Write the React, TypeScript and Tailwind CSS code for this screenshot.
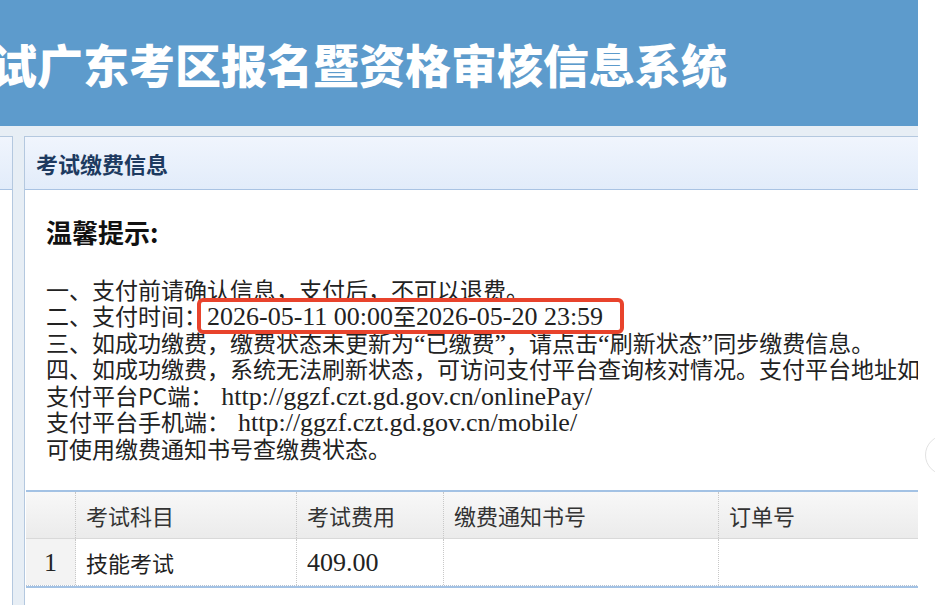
const cjk = "font-['Noto_Sans_CJK_SC',sans-serif]";
const serif = "font-['Liberation_Serif','Noto_Sans_CJK_SC',serif] text-[26px]";

function Line({ children, className = "" }: { children: React.ReactNode; className?: string }) {
  return <div className={`h-[26.5px] leading-[26.5px] whitespace-nowrap ${className}`}>{children}</div>;
}

export default function App() {
  return (
    <div className={`relative h-[605px] w-[935px] overflow-hidden bg-white ${cjk}`}>
      <div className="flex h-full w-[918px] flex-col overflow-hidden bg-[#e7eef5]">
        <header className="flex h-[126px] shrink-0 items-center bg-[#5d9bcc]">
          <h1 className="-ml-[9px] whitespace-nowrap text-[46px] font-black leading-none text-white">
            试广东考区报名暨资格审核信息系统
          </h1>
        </header>

        <div className="mt-[10px] flex flex-1">
          <div className="w-[13px] shrink-0 border-r border-t border-[#b4c8df] bg-white">
            <div className="h-[53px] border-b border-[#a9c3e3] bg-gradient-to-b from-[#f0f5fd] to-[#e2ecfa]" />
          </div>

          <section className="ml-[11px] flex flex-1 flex-col border-l border-t border-[#b4c8df] bg-white">
            <div className="flex h-[53px] shrink-0 items-center border-b border-[#a9c3e3] bg-gradient-to-b from-[#f0f5fd] to-[#e2ecfa] pl-[11px]">
              <h2 className="text-[22px] font-bold leading-none text-[#1d3a60]">考试缴费信息</h2>
            </div>

            <div className="pl-[21px] pt-[27px] text-[23px] text-[#222]">
              <p className="h-[30px] text-[26px] font-bold leading-[30px] text-[#111]">温馨提示:</p>
              <div className="mt-[28.5px]">
                <Line>一、支付前请确认信息，支付后，不可以退费。</Line>
                <Line className="relative">
                  二、支付时间：
                  <span className="relative z-10 inline-block w-0 overflow-visible">
                    <span className="absolute -left-[10px] -top-[27px] h-[36px] w-[427px] rounded-[6px] border-[4px] border-[#e8432c] bg-white" />
                  </span>
                  <span className={`relative z-20 ${serif}`}>
                    2026-05-11 00:00<span className={cjk + " text-[23px]"}>至</span>2026-05-20 23:59
                  </span>
                </Line>
                <Line>
                  三、如成功缴费，缴费状态未更新为<span className={serif}>“</span>已缴费<span className={serif}>”</span>，请点击<span className={serif}>“</span>刷新状态<span className={serif}>”</span>同步缴费信息。
                </Line>
                <Line>四、如成功缴费，系统无法刷新状态，可访问支付平台查询核对情况。支付平台地址如下：</Line>
                <Line>
                  支付平台PC端：<span className={`ml-[8px] ${serif}`}>http://ggzf.czt.gd.gov.cn/onlinePay/</span>
                </Line>
                <Line>
                  支付平台手机端：<span className={`ml-[8px] ${serif}`}>http://ggzf.czt.gd.gov.cn/mobile/</span>
                </Line>
                <Line>可使用缴费通知书号查缴费状态。</Line>
              </div>
            </div>

            <div className="ml-[1px] mt-[29px] border-b-2 border-t-2 border-[#a3c2e4] text-[22px] text-[#333]">
              <div className="grid h-[47px] grid-cols-[50px_221px_147px_275px_300px] border-b border-[#d9d9d9] bg-gradient-to-b from-[#f8f8f8] to-[#ebebeb]">
                <div className="border-r border-dotted border-[#c8c8c8]" />
                <div className="flex items-center border-r border-dotted border-[#c8c8c8] pl-[10px]">考试科目</div>
                <div className="flex items-center border-r border-dotted border-[#c8c8c8] pl-[10px]">考试费用</div>
                <div className="flex items-center border-r border-dotted border-[#c8c8c8] pl-[10px]">缴费通知书号</div>
                <div className="flex items-center pl-[10px]">订单号</div>
              </div>
              <div className="grid h-[47px] grid-cols-[50px_221px_147px_275px_300px] border-b border-dotted border-[#b8c4d4] text-[#222]">
                <div className={`flex items-center justify-center border-r border-dotted border-[#c8c8c8] bg-[#f3f3f3] ${serif} text-[24px]`}>1</div>
                <div className="flex items-center border-r border-dotted border-[#c8c8c8] pl-[10px]">技能考试</div>
                <div className={`flex items-center border-r border-dotted border-[#c8c8c8] pl-[10px] ${serif} text-[24px]`}>409.00</div>
                <div className="border-r border-dotted border-[#c8c8c8]" />
                <div />
              </div>
            </div>
          </section>
        </div>
      </div>

      <div className="absolute left-[925px] top-[435px] h-[40px] w-[40px] rounded-full border border-[#e2e2e2] bg-white" />
    </div>
  );
}
